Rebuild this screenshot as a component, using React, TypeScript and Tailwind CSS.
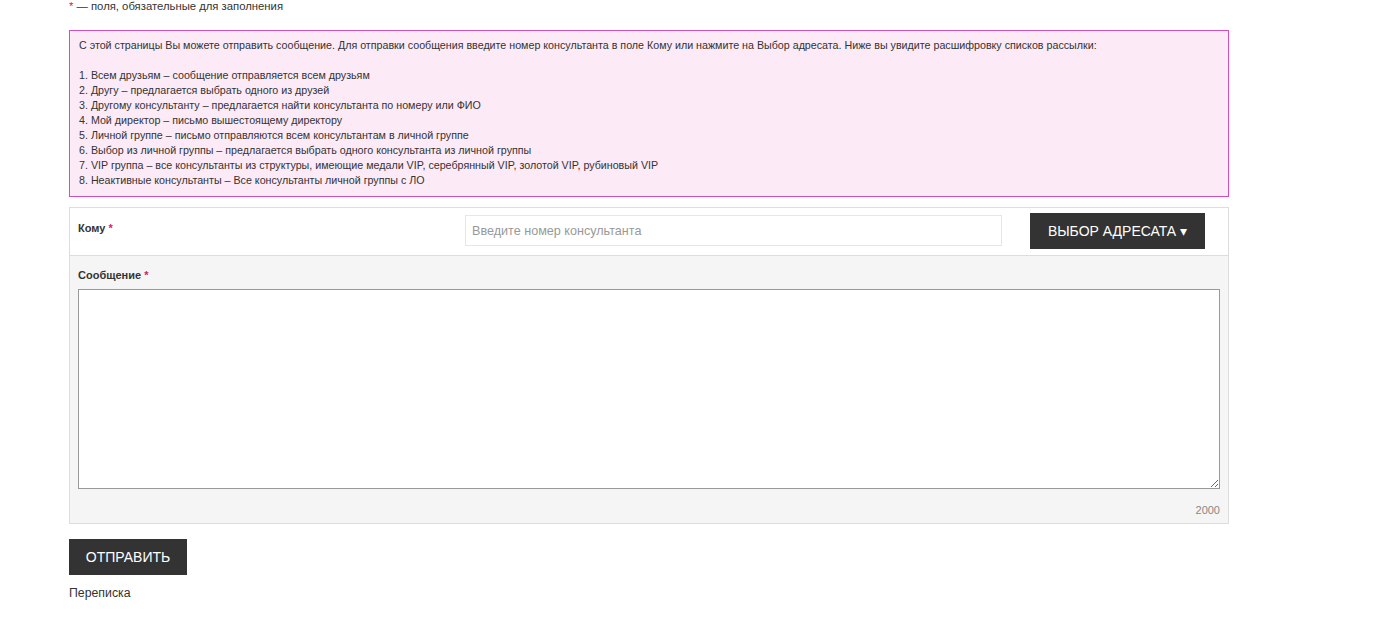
import { useState } from "react";

const items = [
  "1. Всем друзьям – сообщение отправляется всем друзьям",
  "2. Другу – предлагается выбрать одного из друзей",
  "3. Другому консультанту – предлагается найти консультанта по номеру или ФИО",
  "4. Мой директор – письмо вышестоящему директору",
  "5. Личной группе – письмо отправляются всем консультантам в личной группе",
  "6. Выбор из личной группы – предлагается выбрать одного консультанта из личной группы",
  "7. VIP группа – все консультанты из структуры, имеющие медали VIP, серебрянный VIP, золотой VIP, рубиновый VIP",
  "8. Неактивные консультанты – Все консультанты личной группы с ЛО",
];

export default function App() {
  const [text, setText] = useState("");

  return (
    <div className="min-h-[630px] bg-white text-[#333] font-['Liberation_Sans',Arial,sans-serif]">
      <div className="w-[1160px] ml-[69px]">
        <p className="text-[11.3px] leading-[13px]">
          <span className="text-[#d0206a]">*</span> — поля, обязательные для заполнения
        </p>

        {/* Info box */}
        <div className="mt-[17px] border border-[#d24fc0] bg-[#fdeaf7] px-[9px] pt-[7px] pb-[8px] text-[10.7px] leading-[15px]">
          <p>
            С этой страницы Вы можете отправить сообщение. Для отправки сообщения введите номер консультанта в поле Кому или нажмите на Выбор адресата. Ниже вы увидите расшифровку списков рассылки:
          </p>
          <div className="mt-[15px]">
            {items.map((t) => (
              <p key={t}>{t}</p>
            ))}
          </div>
        </div>

        {/* Form panel */}
        <div className="mt-[10px] border border-[#ddd]">
          <div className="flex items-start bg-white h-[48px] border-b border-[#ddd] px-[8px]">
            <label className="w-[387px] pt-[14px] text-[11px] font-bold leading-[13px]">
              Кому <span className="text-[#d0206a]">*</span>
            </label>
            <input
              className="mt-[7px] w-[537px] h-[31px] border border-[#e6e6e6] px-[6px] text-[12.6px] outline-none placeholder:text-[#999]"
              placeholder="Введите номер консультанта"
            />
            <button className="ml-[28px] mt-[5px] h-[36px] w-[175px] bg-[#333] text-white text-[14px] uppercase">
              Выбор адресата ▾
            </button>
          </div>
          <div className="bg-[#f5f5f5] px-[8px] pt-[13px] pb-[6px]">
            <label className="block text-[11px] font-bold leading-[13px]">
              Сообщение <span className="text-[#d0206a]">*</span>
            </label>
            <textarea
              value={text}
              onChange={(e) => setText(e.target.value)}
              maxLength={2000}
              className="mt-[7px] block w-full h-[200px] border border-[#999] bg-white p-[4px] text-[12px] outline-none"
            />
            <p className="mt-[15px] text-right text-[11px] leading-[13px] text-[#888]">
              {2000 - text.length}
            </p>
          </div>
        </div>

        <button className="mt-[15px] h-[36px] w-[118px] bg-[#333] text-white text-[14px] uppercase">
          Отправить
        </button>
        <p className="mt-[11px] text-[12.3px] leading-[14px]">Переписка</p>
      </div>
    </div>
  );
}
